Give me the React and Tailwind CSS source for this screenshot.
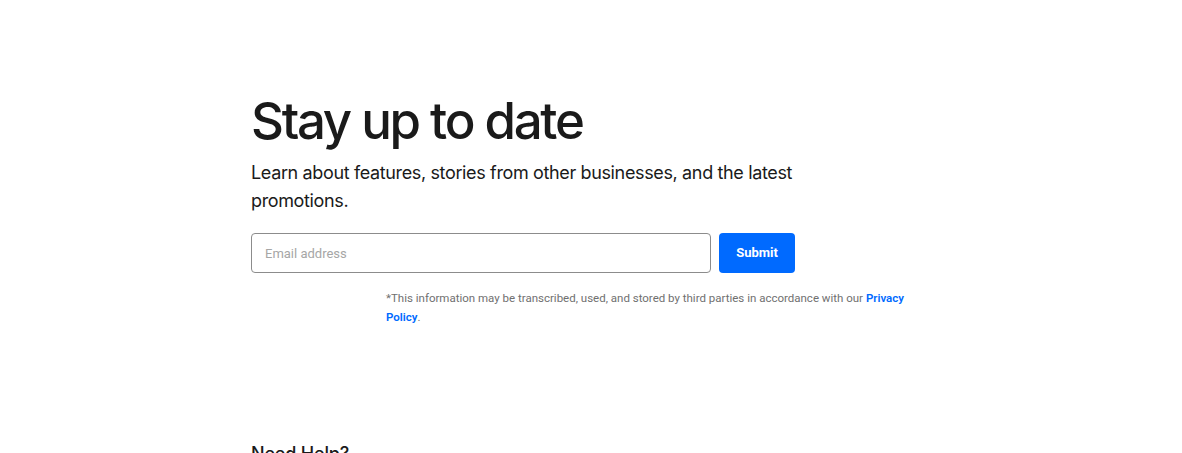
import React from 'react';

const App = () => {
  return (
    <div className="min-h-[453px] bg-white overflow-hidden font-['Inter',sans-serif] text-[#1a1a1a]">
      <div className="pl-[251px] pt-[89px]">
        {/* Newsletter */}
        <div className="w-[680px]">
          <h1 className="text-[51px] leading-[64px] font-medium tracking-[-0.045em]">Stay up to date</h1>
          <p className="mt-[6px] w-[560px] text-[18px] leading-[28px] tracking-[-0.02em]">
            Learn about features, stories from other businesses, and the latest promotions.
          </p>
          <form className="mt-[18px] flex gap-2 w-[544px]" onSubmit={(e) => e.preventDefault()}>
            <input
              type="email"
              placeholder="Email address"
              className="h-10 w-[460px] rounded-[4px] border border-[#8c8c8c] px-[13px] text-[13px] font-['Roboto',sans-serif] placeholder:text-[#a6a6a6] outline-none"
            />
            <button
              type="submit"
              className="h-10 w-[76px] rounded-[4px] bg-[#006aff] text-white text-[13px] font-bold font-['Roboto',sans-serif]"
            >
              Submit
            </button>
          </form>
          <p className="ml-[135px] mt-[16px] w-[526px] text-[11.5px] leading-[19px] text-[#707070] font-['Roboto',sans-serif]">
            *This information may be transcribed, used, and stored by third parties in accordance with our{' '}
            <a href="#" className="text-[#006aff] font-semibold">Privacy Policy</a>.
          </p>
        </div>

        {/* Help */}
        <h2 className="mt-[113px] text-[18px] font-medium tracking-[-0.01em]">Need Help?</h2>
      </div>
    </div>
  );
};

export default App;
